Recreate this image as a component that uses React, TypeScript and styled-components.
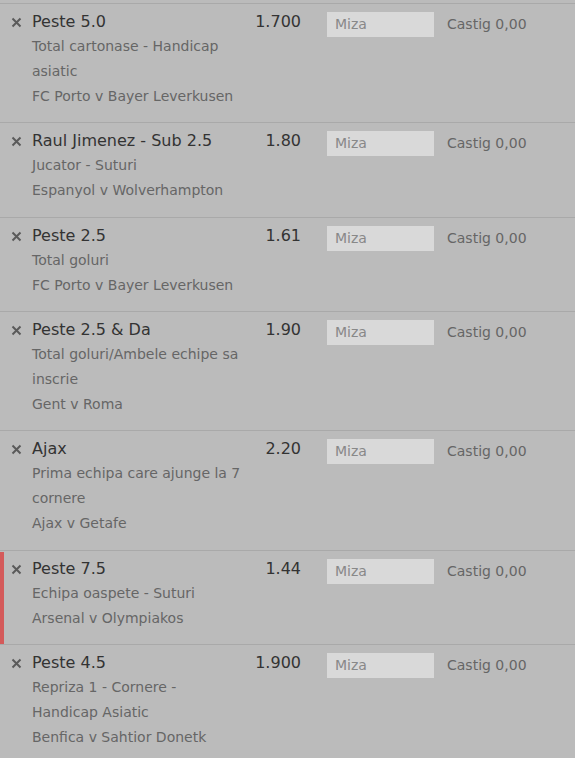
import React from "react";
import styled, { createGlobalStyle } from "styled-components";

const Global = createGlobalStyle`
  html, body { margin: 0; padding: 0; background: #bbbbbb; }
  body { font-family: "DejaVu Sans", Verdana, sans-serif; }
`;

const List = styled.div`
  padding-top: 3px;
  background: #bbbbbb;
`;

const Row = styled.div<{ $active?: boolean }>`
  position: relative;
  display: grid;
  grid-template-columns: 32px 210px 59px 107px 1fr;
  border-top: 1px solid #a9a9a9;
  padding: 5px 0 13.33px;
  &::before {
    content: "";
    display: ${(p) => (p.$active ? "block" : "none")};
    position: absolute;
    left: 0;
    top: 1px;
    bottom: 0;
    width: 4px;
    background: #d45a5a;
  }
`;

const Remove = styled.div`
  height: 25px;
  display: flex;
  align-items: center;
  justify-content: center;
  padding-top: 1px;
  svg { display: block; }
`;

const Info = styled.div`
  display: flex;
  flex-direction: column;
`;

const Title = styled.div`
  font-size: 16px;
  line-height: 25px;
  color: #333333;
`;

const Sub = styled.div`
  font-size: 14px;
  line-height: 25px;
  color: #666666;
`;

const Odds = styled.div`
  font-size: 16px;
  line-height: 25px;
  color: #333333;
  text-align: right;
`;

const Stake = styled.div`
  margin-top: 3px;
  height: 25px;
  width: 107px;
  box-sizing: border-box;
  background: #d9d9d9;
  color: #888888;
  font-size: 14px;
  line-height: 25px;
  padding-left: 8px;
  margin-left: 26px;
`;

const Win = styled.div`
  margin-top: 3px;
  font-size: 14px;
  line-height: 25px;
  color: #666666;
  padding-left: 39px;
  white-space: nowrap;
`;

const CloseIcon = () => (
  <svg width="11" height="11" viewBox="0 0 11 11">
    <path d="M1.5 1.5 L9.5 9.5 M9.5 1.5 L1.5 9.5" stroke="#5a5a5a" strokeWidth="2" />
  </svg>
);

type Bet = { title: string; market: string; event: string; odds: string; active?: boolean };

const bets: Bet[] = [
  { title: "Peste 5.0", market: "Total cartonase - Handicap asiatic", event: "FC Porto v Bayer Leverkusen", odds: "1.700" },
  { title: "Raul Jimenez - Sub 2.5", market: "Jucator - Suturi", event: "Espanyol v Wolverhampton", odds: "1.80" },
  { title: "Peste 2.5", market: "Total goluri", event: "FC Porto v Bayer Leverkusen", odds: "1.61" },
  { title: "Peste 2.5 & Da", market: "Total goluri/Ambele echipe sa inscrie", event: "Gent v Roma", odds: "1.90" },
  { title: "Ajax", market: "Prima echipa care ajunge la 7 cornere", event: "Ajax v Getafe", odds: "2.20" },
  { title: "Peste 7.5", market: "Echipa oaspete - Suturi", event: "Arsenal v Olympiakos", odds: "1.44", active: true },
  { title: "Peste 4.5", market: "Repriza 1 - Cornere - Handicap Asiatic", event: "Benfica v Sahtior Donetk", odds: "1.900" },
];

export default function App() {
  return (
    <>
      <Global />
      <List>
        {bets.map((b, i) => (
          <Row key={i} $active={b.active}>
            <Remove><CloseIcon /></Remove>
            <Info>
              <Title>{b.title}</Title>
              <Sub>{b.market}</Sub>
              <Sub>{b.event}</Sub>
            </Info>
            <Odds>{b.odds}</Odds>
            <div>
              <Stake>Miza</Stake>
            </div>
            <Win>Castig 0,00</Win>
          </Row>
        ))}
      </List>
    </>
  );
}
